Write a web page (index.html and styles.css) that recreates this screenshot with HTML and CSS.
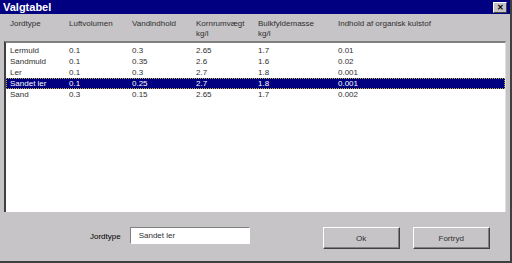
FILE: index.html
```html
<!DOCTYPE html>
<html lang="da">
<head>
    <meta charset="UTF-8">
    <title>Valgtabel</title>
    <link rel="stylesheet" href="styles.css">
</head>
<body>
    <div class="dialog">
        <div class="titlebar">
            <span class="title">Valgtabel</span>
            <button class="close-btn">&#x2715;</button>
        </div>
        <div class="table-head">
            <div>Jordtype</div>
            <div>Luftvolumen</div>
            <div>Vandindhold</div>
            <div>Kornrumvægt<br>kg/l</div>
            <div>Bulkfyldemasse<br>kg/l</div>
            <div>Indhold af organisk kulstof</div>
        </div>
        <div class="list">
            <div class="row"><span>Lermuld</span><span>0.1</span><span>0.3</span><span>2.65</span><span>1.7</span><span>0.01</span></div>
            <div class="row"><span>Sandmuld</span><span>0.1</span><span>0.35</span><span>2.6</span><span>1.6</span><span>0.02</span></div>
            <div class="row"><span>Ler</span><span>0.1</span><span>0.3</span><span>2.7</span><span>1.8</span><span>0.001</span></div>
            <div class="row selected"><span>Sandet ler</span><span>0.1</span><span>0.25</span><span>2.7</span><span>1.8</span><span>0.001</span></div>
            <div class="row"><span>Sand</span><span>0.3</span><span>0.15</span><span>2.65</span><span>1.7</span><span>0.002</span></div>
        </div>
        <div class="footer">
            <label class="field-label" for="jordtype">Jordtype</label>
            <input id="jordtype" class="field" type="text" value="Sandet ler">
            <div class="buttons">
                <button class="btn">Ok</button>
                <button class="btn">Fortryd</button>
            </div>
        </div>
    </div>
</body>
</html>
```

FILE: styles.css
```css
/* Page */
body {
    margin: 0;
    background: #c6c4c6;
    font-family: "Liberation Sans", Arial, sans-serif;
    font-size: 8px;
    color: #000;
}

/* Dialog frame */
.dialog {
    width: 512px;
    height: 263px;
    box-sizing: border-box;
    display: flex;
    flex-direction: column;
    background: #c6c4c6;
    border-right: 2px solid #404040;
    border-bottom: 2px solid #404040;
}

/* Title bar */
.titlebar {
    height: 14px;
    background: #000080;
    display: flex;
    align-items: center;
    justify-content: space-between;
    padding: 0 3px 0 3px;
}

.title {
    color: white;
    font-weight: 700;
    font-size: 11px;
}

.close-btn {
    width: 14px;
    height: 11px;
    padding: 0;
    background: #c6c4c6;
    border: 1px solid;
    border-color: #fff #404040 #404040 #fff;
    font-size: 8px;
    font-weight: 700;
    line-height: 9px;
    color: #000;
}

/* Column header */
.table-head,
.row {
    display: grid;
    grid-template-columns: 59px 63px 64px 62px 80px 1fr;
}

.table-head {
    padding: 5px 0 0 10px;
    height: 22px;
    line-height: 10px;
    color: #303030;
}

/* List */
.list {
    margin: 0 4px 0 4px;
    height: 171px;
    background: #fff;
    border-top: 2px solid #808080;
    border-left: 2px solid #404040;
    border-right: 1px solid #e0e0e0;
    padding-top: 2px;
    box-sizing: border-box;
}

.row {
    height: 11px;
    line-height: 11px;
    padding-left: 4px;
    color: #303030;
}

.row.selected {
    background: #000080;
    color: #fff;
    outline: 1px dotted #c0b040;
    outline-offset: -1px;
}

/* Footer */
.footer {
    flex: 1;
    display: flex;
    align-items: flex-start;
    padding: 15px 0 0 90px;
}

.field-label {
    margin-top: 5px;
    margin-right: 9px;
    font-size: 8px;
}

.field {
    width: 120px;
    height: 17px;
    box-sizing: border-box;
    border: 1px solid;
    border-color: #808080 #fff #fff #808080;
    padding: 0 0 0 8px;
    font-family: inherit;
    font-size: 8px;
    color: #303030;
}

.buttons {
    display: flex;
    gap: 13px;
    margin-left: 73px;
}

.btn {
    width: 77px;
    height: 22px;
    background: #c6c4c6;
    border: 1px solid;
    border-color: #fff #404040 #404040 #fff;
    box-shadow: inset -1px -1px 0 #808080;
    font-family: inherit;
    font-size: 8px;
    color: #303030;
}
```
